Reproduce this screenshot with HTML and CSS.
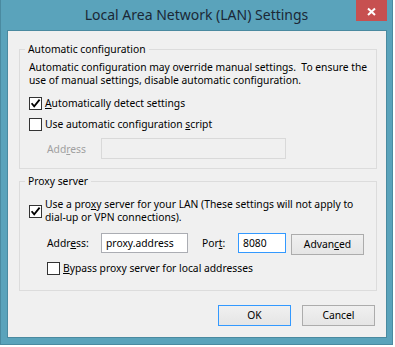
FILE: index.html
```html
<!DOCTYPE html>
<html lang="en">
<head>
  <meta charset="UTF-8">
  <title>Local Area Network (LAN) Settings</title>
  <link rel="stylesheet" href="styles.css">
</head>
<body>
<div class="window">
  <div class="titlebar">
    <span class="title">Local Area Network (LAN) Settings</span>
    <div class="close">
      <svg width="31" height="21" viewBox="0 0 31 21"><path d="M12 8.5 L19 15 M19 8.5 L12 15" stroke="#fff" stroke-width="2" fill="none"/></svg>
    </div>
  </div>
  <div class="client">
    <fieldset class="group">
      <legend>Automatic configuration</legend>
      <p class="note">Automatic configuration may override manual settings.&nbsp; To ensure the<br>use of manual settings, disable automatic configuration.</p>
      <div class="check first">
        <span class="box"><svg width="11" height="11" viewBox="0 0 11 11"><path d="M1.6 5.2 L4.2 8.4 L9.6 1.6" stroke="#000" stroke-width="1.8" fill="none"/></svg></span>
        <span><u>A</u>utomatically detect settings</span>
      </div>
      <div class="check">
        <span class="box"></span>
        <span>Use automatic configuration <u>s</u>cript</span>
      </div>
      <div class="field-row script-row">
        <span class="field-label disabled">Add<u>r</u>ess</span>
        <div class="input script-input"></div>
      </div>
    </fieldset>

    <fieldset class="group proxy">
      <legend>Proxy server</legend>
      <div class="check multi">
        <span class="box"><svg width="11" height="11" viewBox="0 0 11 11"><path d="M1.6 5.2 L4.2 8.4 L9.6 1.6" stroke="#000" stroke-width="1.8" fill="none"/></svg></span>
        <span>Use a pro<u>x</u>y server for your LAN (These settings will not apply to<br>dial-up or VPN connections).</span>
      </div>
      <div class="field-row proxy-row">
        <span class="field-label">Addr<u>e</u>ss:</span>
        <div class="input addr-input">proxy.address</div>
        <span class="port-label">Por<u>t</u>:</span>
        <div class="input port-input">8080</div>
        <div class="btn adv-btn">Advan<u>c</u>ed</div>
      </div>
      <div class="check bypass">
        <span class="box"></span>
        <span><u>B</u>ypass proxy server for local addresses</span>
      </div>
    </fieldset>

    <div class="actions">
      <div class="btn default">OK</div>
      <div class="btn">Cancel</div>
    </div>
  </div>
</div>
</body>
</html>
```
FILE: styles.css
```css
body {
  margin: 0;
  background: #fff;
  font-family: "Noto Sans", sans-serif;
  font-size: 10.3px;
  color: #000;
}
u {
  text-underline-offset: 1px;
}
.window {
  width: 391px;
  height: 344px;
  background: #5aa3bb;
  border: 1px solid #4a8aa0;
  border-top: 0;
  display: flex;
  flex-direction: column;
}
.titlebar {
  height: 30px;
  display: grid;
  grid-template-columns: 1fr auto 1fr;
}
.title {
  grid-column: 2;
  font-size: 14px;
  line-height: 30px;
  color: #1b2836;
  white-space: nowrap;
}
.close {
  grid-column: 3;
  justify-self: end;
  align-self: start;
  width: 31px;
  height: 21px;
  margin-right: 5px;
  background: #c75050;
}
.close svg {
  display: block;
}
.client {
  flex: 1;
  margin: 0 5px 6px 6px;
  padding-top: 12px;
  border: 1px solid #4a8aa0;
  background: #f0f0f0;
}
.group {
  margin: 0 9px 0 11px;
  padding: 5px 9px 9px 9px;
  border: 1px solid #dcdcdc;
  min-width: 0;
}
.group legend {
  margin-left: -4px;
  padding: 0 3px;
  line-height: 13px;
}
.proxy {
  margin-top: 6px;
  padding-bottom: 15px;
}
.note {
  margin: 0;
  line-height: 13px;
  white-space: nowrap;
}
.check {
  display: flex;
  align-items: center;
  gap: 3px;
  line-height: 13px;
  margin-top: 8px;
  white-space: nowrap;
}
.check.first {
  margin-top: 10px;
}
.check.multi {
  margin-top: 5px;
}
.check.bypass {
  margin-top: 7px;
  margin-left: 18px;
}
.box {
  flex: none;
  width: 13px;
  height: 13px;
  box-sizing: border-box;
  border: 1px solid #333;
  background: #fff;
}
.box svg {
  display: block;
}
.field-row {
  display: flex;
  align-items: flex-start;
}
.script-row {
  margin-top: 7px;
  align-items: center;
}
.proxy-row {
  margin-top: 9px;
}
.field-label {
  flex: none;
  width: 54px;
  margin-left: 18px;
  line-height: 20px;
}
.field-label.disabled {
  color: #a0a0a0;
}
.port-label {
  flex: none;
  width: 36px;
  margin-left: 14px;
  line-height: 20px;
}
.input {
  box-sizing: border-box;
  height: 20px;
  padding: 0 4px;
  border: 1px solid #abadb3;
  background: #fff;
  line-height: 18px;
  white-space: nowrap;
}
.script-input {
  width: 185px;
  height: 21px;
  border-color: #d9d9d9;
  background: #f0f0f0;
}
.addr-input {
  width: 87px;
}
.port-input {
  width: 48px;
  border-color: #3399ff;
}
.btn {
  box-sizing: border-box;
  width: 73px;
  height: 21px;
  display: flex;
  align-items: center;
  justify-content: center;
  border: 1px solid #acacac;
  background: linear-gradient(#f0f0f0, #e5e5e5);
  line-height: 13px;
}
.btn.default {
  border-color: #3399ff;
}
.adv-btn {
  margin: 1px 0 0 5px;
}
.actions {
  display: flex;
  justify-content: flex-end;
  gap: 11px;
  margin: 14px 11px 0 0;
}
```
